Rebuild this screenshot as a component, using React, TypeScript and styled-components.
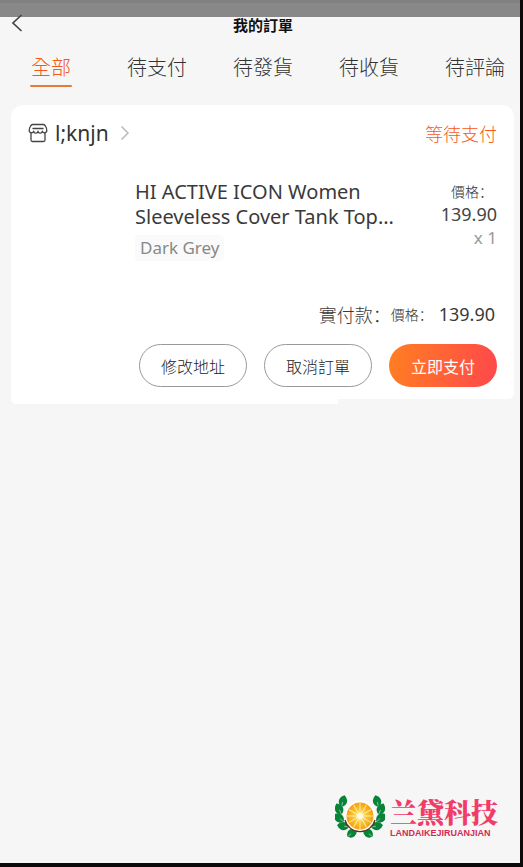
import React from "react";
import styled, { createGlobalStyle, css } from "styled-components";

const GlobalStyle = createGlobalStyle`
  *, *::before, *::after { box-sizing: border-box; }
  html, body, #root { height: 100%; }
  body {
    margin: 0;
    background: #0c0a0b;
    font-family: "Noto Sans", "Noto Sans CJK TC", sans-serif;
  }
  button { font-family: inherit; cursor: pointer; }
`;

const Screen = styled.div`
  display: flex;
  flex-direction: column;
  min-height: 100%;
  border: solid #0c0a0b;
  border-width: 0 3px 4px 0;
  background: #f6f6f6;
  overflow: hidden;
`;

const StatusBar = styled.div`
  height: 17px;
  border-top: 3px solid #808080;
  background: #888;
`;

const Header = styled.header`
  display: grid;
  grid-template-columns: 36px 1fr 36px;
  align-items: center;
  height: 16px;
`;

const BackButton = styled.button`
  display: flex;
  justify-content: flex-end;
  width: 24px;
  margin-top: -4px;
  padding: 0;
  border: 0;
  background: none;
  color: #444;
`;

const PageTitle = styled.h1`
  margin: 0;
  padding-left: 6px;
  color: #111;
  font-size: 15px;
  font-weight: 700;
  line-height: 14px;
  text-align: center;
`;

const Tabs = styled.nav`
  display: grid;
  grid-template-columns: repeat(5, 1fr);
  margin: 19px -8px 0 -2px;
`;

const Tab = styled.button<{ $active?: boolean }>`
  display: flex;
  flex-direction: column;
  align-items: center;
  gap: 1px;
  padding: 0;
  border: 0;
  background: none;
  color: #333;
  font-size: 20px;
  font-weight: 300;
  line-height: 32px;
  white-space: nowrap;

  ${({ $active }) =>
    $active &&
    css`
      color: #f4581a;

      &::after {
        content: "";
        width: 42px;
        height: 2px;
        border-radius: 1px;
        background: #e57a3a;
      }
    `}
`;

const Orders = styled.main`
  flex: 1;
  padding: 18px 6px 0 11px;
`;

const OrderCard = styled.article`
  padding: 12px 17px;
  border-radius: 12px 12px 6px 0;
  background: #fff;
`;

const CardLip = styled.div`
  width: 65%;
  height: 5px;
  border-radius: 0 0 2px 12px;
  background: #fff;
`;

const CardHeader = styled.div`
  display: flex;
  align-items: center;
  justify-content: space-between;
  height: 32px;
`;

const ShopLink = styled.a`
  display: flex;
  align-items: center;
  gap: 7px;
  color: #333;
  font-size: 21px;
  line-height: 32px;
  text-decoration: none;
`;

const ShopName = styled.span`
  padding-right: 4px;
`;

const Status = styled.span`
  color: #f4581a;
  font-size: 18px;
  font-weight: 300;
`;

const Product = styled.div`
  display: grid;
  grid-template-columns: 90px 1fr auto;
  column-gap: 17px;
  min-height: 122px;
  margin-top: 30px;
`;

const Thumb = styled.div`
  border-radius: 8px;
  background: #fff;
`;

const ProductName = styled.h2`
  margin: 0;
  color: #3a3a3a;
  font-size: 20px;
  font-weight: 400;
  line-height: 25px;
`;

const NameLine = styled.span`
  display: block;
  white-space: nowrap;
`;

const Variant = styled.span`
  display: inline-block;
  margin-top: 6px;
  padding: 0 5px;
  border-radius: 4px;
  background: #fafafa;
  color: #888;
  font-size: 17px;
  line-height: 26px;
`;

const PriceColumn = styled.div`
  display: flex;
  flex-direction: column;
  align-items: flex-end;
  padding-top: 1px;
  color: #444;
  font-size: 18px;
  line-height: 23px;
`;

const PriceLabel = styled.span<{ $inset?: boolean }>`
  padding-right: ${({ $inset }) => ($inset ? "4px" : "0")};
  color: #333;
  font-family: "Noto Sans CJK SC", sans-serif;
  font-size: 14px;
  font-weight: 300;
`;

const Quantity = styled.span`
  color: #999;
  font-size: 17px;
`;

const Total = styled.div`
  display: flex;
  align-items: center;
  justify-content: flex-end;
  padding-right: 2px;
  color: #3a3a3a;
  font-size: 18px;
  line-height: 26px;
`;

const TotalLabel = styled.span`
  font-family: "Noto Sans CJK SC", sans-serif;
  font-weight: 300;
`;

const TotalPrice = styled.span`
  padding-left: 6px;
`;

const Actions = styled.div`
  display: flex;
  justify-content: flex-end;
  gap: 17px;
  margin-top: 17px;
`;

const PillButton = styled.button<{ $primary?: boolean }>`
  width: 108px;
  height: 43px;
  padding: 0;
  border: 1px solid #999;
  border-radius: 22px;
  background: #fff;
  color: #222;
  font-size: 16px;
  font-weight: 300;

  ${({ $primary }) =>
    $primary &&
    css`
      border: 0;
      background: linear-gradient(100deg, #ff7f21, #ff474c);
      color: #fff;
      font-weight: 400;
    `}
`;

const Footer = styled.footer`
  display: flex;
  align-items: center;
  justify-content: flex-end;
  gap: 5px;
  padding: 0 22px 24px 0;
`;

const Brand = styled.div`
  display: flex;
  flex-direction: column;
`;

const BrandName = styled.strong`
  color: #f13c68;
  font-family: "Noto Serif CJK SC", "Noto Sans CJK SC", sans-serif;
  font-size: 27px;
  font-weight: 900;
  line-height: 32px;
`;

const BrandLatin = styled.span`
  color: #d42a55;
  font-family: "Liberation Sans", sans-serif;
  font-size: 9px;
  font-weight: 700;
  line-height: 10px;
`;

const leaves = [
  { x: 14, y: 10, r: 15 },
  { x: 10, y: 18, r: -25 },
  { x: 10, y: 27, r: -50 },
  { x: 14, y: 35, r: -80 },
  { x: 23, y: 42, r: 50 },
];

const Leaves = () => (
  <>
    {leaves.map((leaf) => (
      <g key={leaf.y} transform={`translate(${leaf.x} ${leaf.y}) rotate(${leaf.r})`}>
        <path d="M0-6C5-3 6 3 0 6C-6 3-5-3 0-6Z" fill="#078437" />
        <path d="M0 1V6" stroke="#dff0e2" strokeWidth=".5" />
      </g>
    ))}
  </>
);

const WreathLogo = () => (
  <svg width="50" height="44" viewBox="6 4 50 44" fill="none" aria-hidden="true">
    <defs>
      <radialGradient id="citrus">
        <stop offset="0" stopColor="#fff3a0" />
        <stop offset=".5" stopColor="#fbc52f" />
        <stop offset="1" stopColor="#f3a012" />
      </radialGradient>
    </defs>
    <Leaves />
    <g transform="translate(62 0) scale(-1 1)">
      <Leaves />
    </g>
    <circle cx="31" cy="25" r="15.5" fill="#fff" />
    <path d="M16 29A15.5 15.5 0 0 0 46 29" stroke="#53301d" strokeWidth="1.2" />
    <circle cx="31" cy="25" r="13.5" fill="url(#citrus)" />
    {Array.from({ length: 12 }, (_, i) => (
      <path key={i} d="M31 25V12" stroke="#fff6cf" strokeWidth=".8" transform={`rotate(${i * 30} 31 25)`} />
    ))}
    <circle cx="31" cy="25" r="3" fill="#fffbe3" />
  </svg>
);

const ShopIcon = () => (
  <svg width="20" height="20" viewBox="0 0 20 20" fill="none" stroke="#444" strokeWidth="1.3" strokeLinejoin="round" strokeLinecap="round" aria-hidden="true">
    <path d="M4.5 1.5H15.5C17 1.5 18.8 5 18.8 7.5C18.8 10.3 14.7 10.5 14.3 8.2C14 10.8 10.3 10.8 10 8.2C9.7 10.8 6 10.8 5.7 8.2C5.3 10.5 1.2 10.3 1.2 7.5C1.2 5 3 1.5 4.5 1.5Z" />
    <path d="M5 5.5H15M3 10V17Q3 18.5 4.5 18.5H15.5Q17 18.5 17 17V10" />
  </svg>
);

const tabs = ["全部", "待支付", "待發貨", "待收貨", "待評論"];

export default function App() {
  return (
    <>
      <GlobalStyle />
      <Screen>
        <StatusBar />
        <Header>
          <BackButton type="button" aria-label="返回">
            <svg width="12" height="18" viewBox="0 0 12 18" fill="none" stroke="currentColor" strokeWidth="1.6">
              <path d="M9.5 1L1 9L9.5 17" />
            </svg>
          </BackButton>
          <PageTitle>我的訂單</PageTitle>
        </Header>
        <Tabs>
          {tabs.map((label, i) => (
            <Tab key={label} type="button" $active={i === 0}>
              {label}
            </Tab>
          ))}
        </Tabs>
        <Orders>
          <OrderCard>
            <CardHeader>
              <ShopLink href="#shop">
                <ShopIcon />
                <ShopName>l;knjn</ShopName>
                <svg width="10" height="16" viewBox="0 0 10 16" fill="none" stroke="#bbb" strokeWidth="1.5" aria-hidden="true">
                  <path d="M1.5 1.5L8 8L1.5 14.5" />
                </svg>
              </ShopLink>
              <Status>等待支付</Status>
            </CardHeader>
            <Product>
              <Thumb />
              <div>
                <ProductName>
                  <NameLine>HI ACTIVE ICON Women</NameLine>
                  <NameLine>Sleeveless Cover Tank Top...</NameLine>
                </ProductName>
                <Variant>Dark Grey</Variant>
              </div>
              <PriceColumn>
                <PriceLabel lang="zh-CN" $inset>價格：</PriceLabel>
                <span>139.90</span>
                <Quantity>x 1</Quantity>
              </PriceColumn>
            </Product>
            <Total>
              <TotalLabel lang="zh-CN">實付款：</TotalLabel>
              <PriceLabel lang="zh-CN">價格：</PriceLabel>
              <TotalPrice>139.90</TotalPrice>
            </Total>
            <Actions>
              <PillButton type="button">修改地址</PillButton>
              <PillButton type="button">取消訂單</PillButton>
              <PillButton type="button" $primary>
                立即支付
              </PillButton>
            </Actions>
          </OrderCard>
          <CardLip />
        </Orders>
        <Footer>
          <WreathLogo />
          <Brand>
            <BrandName lang="zh-CN">兰黛科技</BrandName>
            <BrandLatin>LANDAIKEJIRUANJIAN</BrandLatin>
          </Brand>
        </Footer>
      </Screen>
    </>
  );
}
